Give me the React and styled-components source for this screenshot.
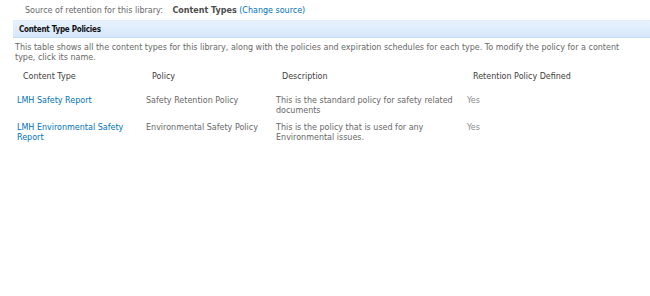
import React from "react";
import styled, { createGlobalStyle } from "styled-components";

const Global = createGlobalStyle`
  html, body { margin: 0; padding: 0; background: #ffffff; }
  body {
    font-family: "DejaVu Sans", Verdana, sans-serif;
    font-size: 8px;
    color: #676767;
  }
`;

const Page = styled.div`
  width: 650px;
  height: 296px;
  overflow: hidden;
  display: flex;
  flex-direction: column;
`;

const SourceLine = styled.div`
  margin-top: 6px;
  padding-left: 25px;
  line-height: 10px;
  white-space: nowrap;
`;

const Strong = styled.span`
  font-weight: bold;
  color: #4c4c4c;
  margin-left: 7px;
`;

const Link = styled.a`
  color: #0072bc;
  text-decoration: none;
`;

const SectionBar = styled.div`
  margin-top: 4px;
  margin-left: 13px;
  height: 16px;
  display: flex;
  align-items: center;
  padding-left: 6px;
  background: linear-gradient(#e8f2fd, #d5e7fb);
  border-top: 1px solid #e3eefb;
  border-bottom: 1px solid #c5dcf3;
`;

const SectionTitle = styled.span`
  font-weight: bold;
  color: #111;
  font-stretch: condensed;
  letter-spacing: -0.25px;
`;

const Intro = styled.p`
  margin: 5px 0 0 15px;
  line-height: 9.5px;
`;

const Grid = styled.div`
  margin: 10px 0 0 17px;
  display: grid;
  grid-template-columns: 129px 130px 191px 1fr;
  line-height: 10.5px;
`;

const HeadCell = styled.div`
  padding: 0 0 13px 6px;
  color: #3d3d3d;
  white-space: nowrap;
`;

const Cell = styled.div`
  padding: 0 ${(p) => p.$pr || 0}px 6px 0;
  color: ${(p) => (p.$light ? "#8a8a8a" : "#676767")};
`;

const rows = [
  {
    name: "LMH Safety Report",
    policy: "Safety Retention Policy",
    desc: "This is the standard policy for safety related documents",
    defined: "Yes",
  },
  {
    name: "LMH Environmental Safety Report",
    policy: "Environmental Safety Policy",
    desc: "This is the policy that is used for any Environmental issues.",
    defined: "Yes",
  },
];

export default function App() {
  return (
    <Page>
      <Global />
      <SourceLine>
        Source of retention for this library: <Strong>Content Types</Strong>{" "}
        <Link href="#">(Change source)</Link>
      </SourceLine>
      <SectionBar>
        <SectionTitle>Content Type Policies</SectionTitle>
      </SectionBar>
      <Intro>
        This table shows all the content types for this library, along with the
        policies and expiration schedules for each type. To modify the policy for a content
        <br />
        type, click its name.
      </Intro>
      <Grid>
        <HeadCell>Content Type</HeadCell>
        <HeadCell>Policy</HeadCell>
        <HeadCell>Description</HeadCell>
        <HeadCell>Retention Policy Defined</HeadCell>
        {rows.map((r) => (
          <React.Fragment key={r.name}>
            <Cell $pr={4}>
              <Link href="#">{r.name}</Link>
            </Cell>
            <Cell $pr={4}>{r.policy}</Cell>
            <Cell $pr={2}>{r.desc}</Cell>
            <Cell $light>{r.defined}</Cell>
          </React.Fragment>
        ))}
      </Grid>
    </Page>
  );
}
